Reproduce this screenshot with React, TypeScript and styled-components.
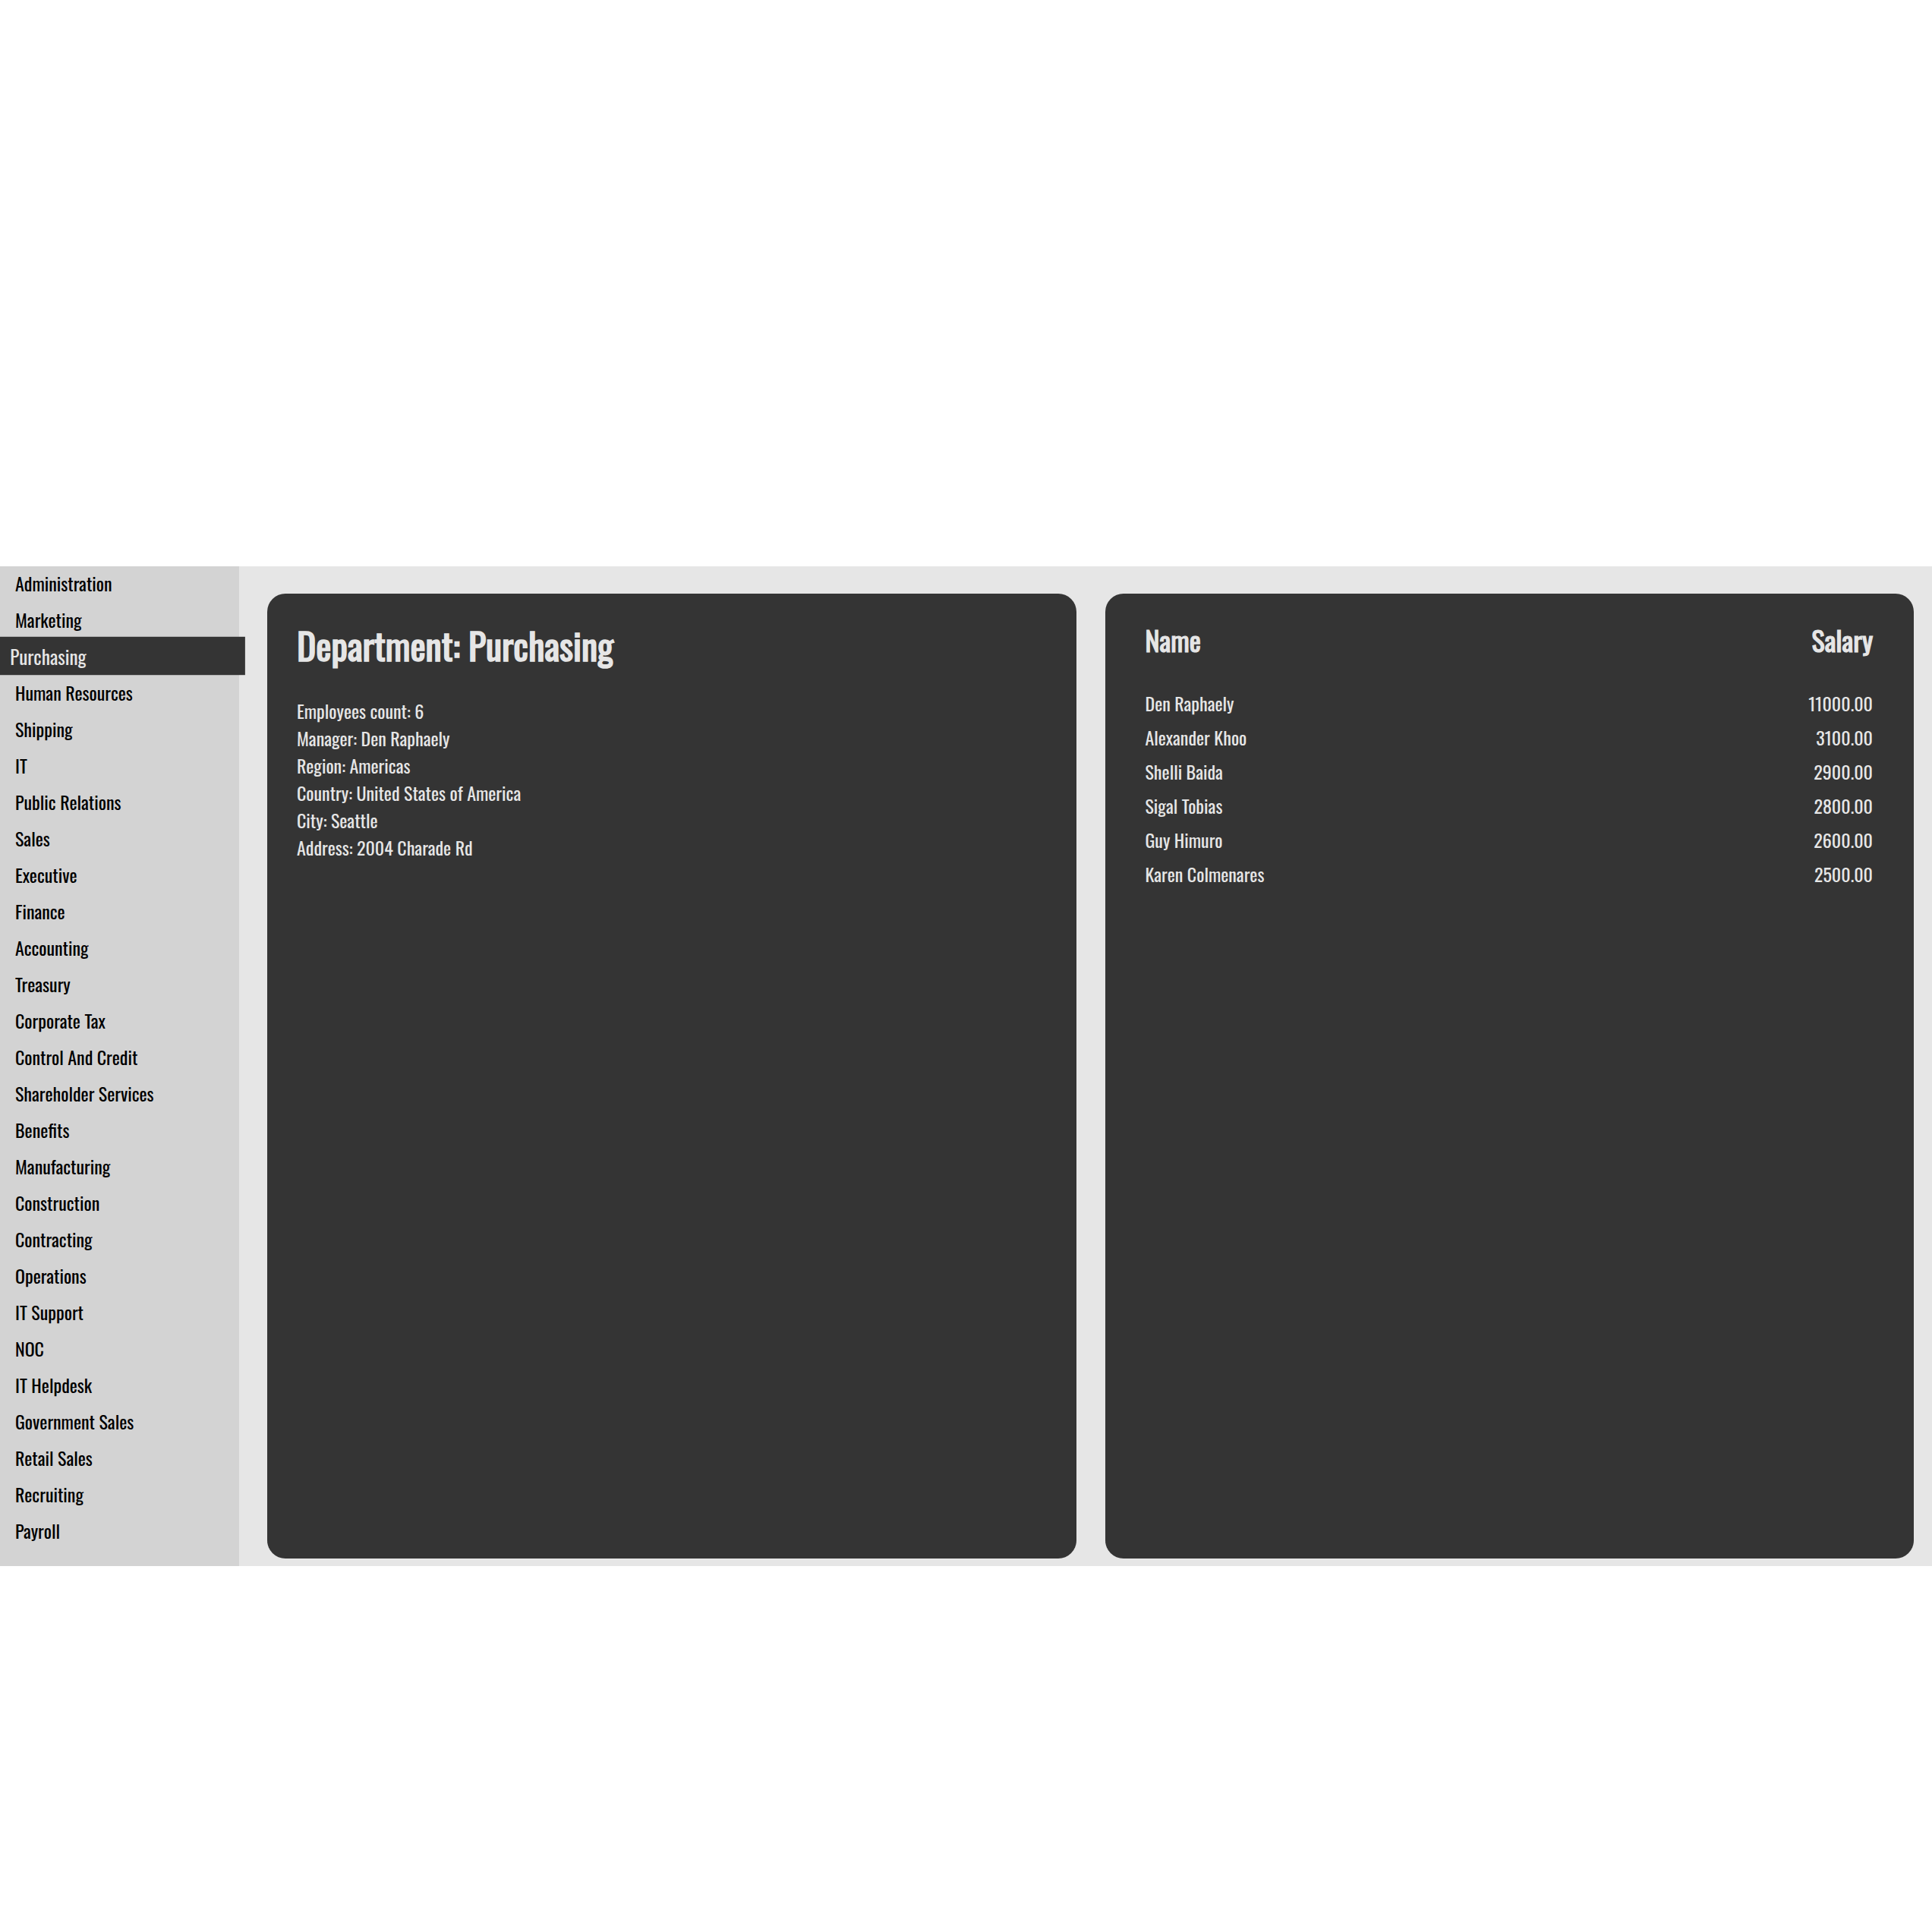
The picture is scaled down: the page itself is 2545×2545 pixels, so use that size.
import React from "react";
import styled, { createGlobalStyle } from "styled-components";

const GlobalStyle = createGlobalStyle`
  html, body {
    margin: 0;
    padding: 0;
    background: #ffffff;
  }
  body {
    font-family: "Oswald", "Roboto Condensed", "Liberation Sans", sans-serif;
    font-size: 24px;
  }
  * { box-sizing: border-box; }
`;

const departments = [
  "Administration",
  "Marketing",
  "Purchasing",
  "Human Resources",
  "Shipping",
  "IT",
  "Public Relations",
  "Sales",
  "Executive",
  "Finance",
  "Accounting",
  "Treasury",
  "Corporate Tax",
  "Control And Credit",
  "Shareholder Services",
  "Benefits",
  "Manufacturing",
  "Construction",
  "Contracting",
  "Operations",
  "IT Support",
  "NOC",
  "IT Helpdesk",
  "Government Sales",
  "Retail Sales",
  "Recruiting",
  "Payroll",
];

const details = [
  "Employees count: 6",
  "Manager: Den Raphaely",
  "Region: Americas",
  "Country: United States of America",
  "City: Seattle",
  "Address: 2004 Charade Rd",
];

const employees = [
  { name: "Den Raphaely", salary: "11000.00" },
  { name: "Alexander Khoo", salary: "3100.00" },
  { name: "Shelli Baida", salary: "2900.00" },
  { name: "Sigal Tobias", salary: "2800.00" },
  { name: "Guy Himuro", salary: "2600.00" },
  { name: "Karen Colmenares", salary: "2500.00" },
];

const Page = styled.div`
  padding-top: 746px;
  padding-bottom: 482px;
`;

const Layout = styled.div`
  display: flex;
  height: 1317px;
  background: #e6e6e6;
`;

const Sidebar = styled.nav`
  width: 315px;
  flex: none;
  background: #d3d3d3;
`;

const NavList = styled.div`
  display: flex;
  flex-direction: column;
  margin-top: -2px;
`;

const NavItem = styled.div<{ $active?: boolean }>`
  height: 48px;
  line-height: 48px;
  padding-left: 20px;
  font-size: 24px;
  white-space: nowrap;
  color: ${(p) => (p.$active ? "#e6e6e6" : "#000000")};
  background: ${(p) => (p.$active ? "#343434" : "transparent")};
  transform: ${(p) => (p.$active ? "scale(1.05)" : "none")};
  cursor: pointer;
`;

const Main = styled.main`
  flex: 1;
  display: grid;
  grid-template-columns: 1fr 1fr;
  column-gap: 38px;
  padding: 36px 24px 10px 37px;
`;

const Card = styled.section`
  background: #343434;
  border-radius: 24px;
  padding: 39px;
  color: #e6e6e6;
`;

const Title = styled.h1`
  margin: 0 0 39px;
  font-size: 48px;
  line-height: 57.6px;
  font-weight: 400;
  -webkit-text-stroke: 1.5px currentColor;
`;

const DetailLine = styled.div`
  font-size: 24px;
  line-height: 36px;
`;

const Table = styled.table`
  width: 100%;
  border-collapse: collapse;
`;

const HeadCell = styled.th<{ $right?: boolean }>`
  padding: 0 15px 40px 14px;
  font-size: 36px;
  line-height: 43.2px;
  font-weight: 400;
  -webkit-text-stroke: 1.1px currentColor;
  text-align: ${(p) => (p.$right ? "right" : "left")};
`;

const Cell = styled.td<{ $right?: boolean }>`
  padding: 0 15px 0 14px;
  font-size: 24px;
  line-height: 45px;
  text-align: ${(p) => (p.$right ? "right" : "left")};
`;

export default function App() {
  return (
    <>
      <GlobalStyle />
      <Page>
        <Layout>
          <Sidebar>
            <NavList>
              {departments.map((d) => (
                <NavItem key={d} $active={d === "Purchasing"}>
                  {d}
                </NavItem>
              ))}
            </NavList>
          </Sidebar>
          <Main>
            <Card>
              <Title>Department: Purchasing</Title>
              {details.map((l) => (
                <DetailLine key={l}>{l}</DetailLine>
              ))}
            </Card>
            <Card>
              <Table>
                <thead>
                  <tr>
                    <HeadCell>Name</HeadCell>
                    <HeadCell $right>Salary</HeadCell>
                  </tr>
                </thead>
                <tbody>
                  {employees.map((e) => (
                    <tr key={e.name}>
                      <Cell>{e.name}</Cell>
                      <Cell $right>{e.salary}</Cell>
                    </tr>
                  ))}
                </tbody>
              </Table>
            </Card>
          </Main>
        </Layout>
      </Page>
    </>
  );
}
